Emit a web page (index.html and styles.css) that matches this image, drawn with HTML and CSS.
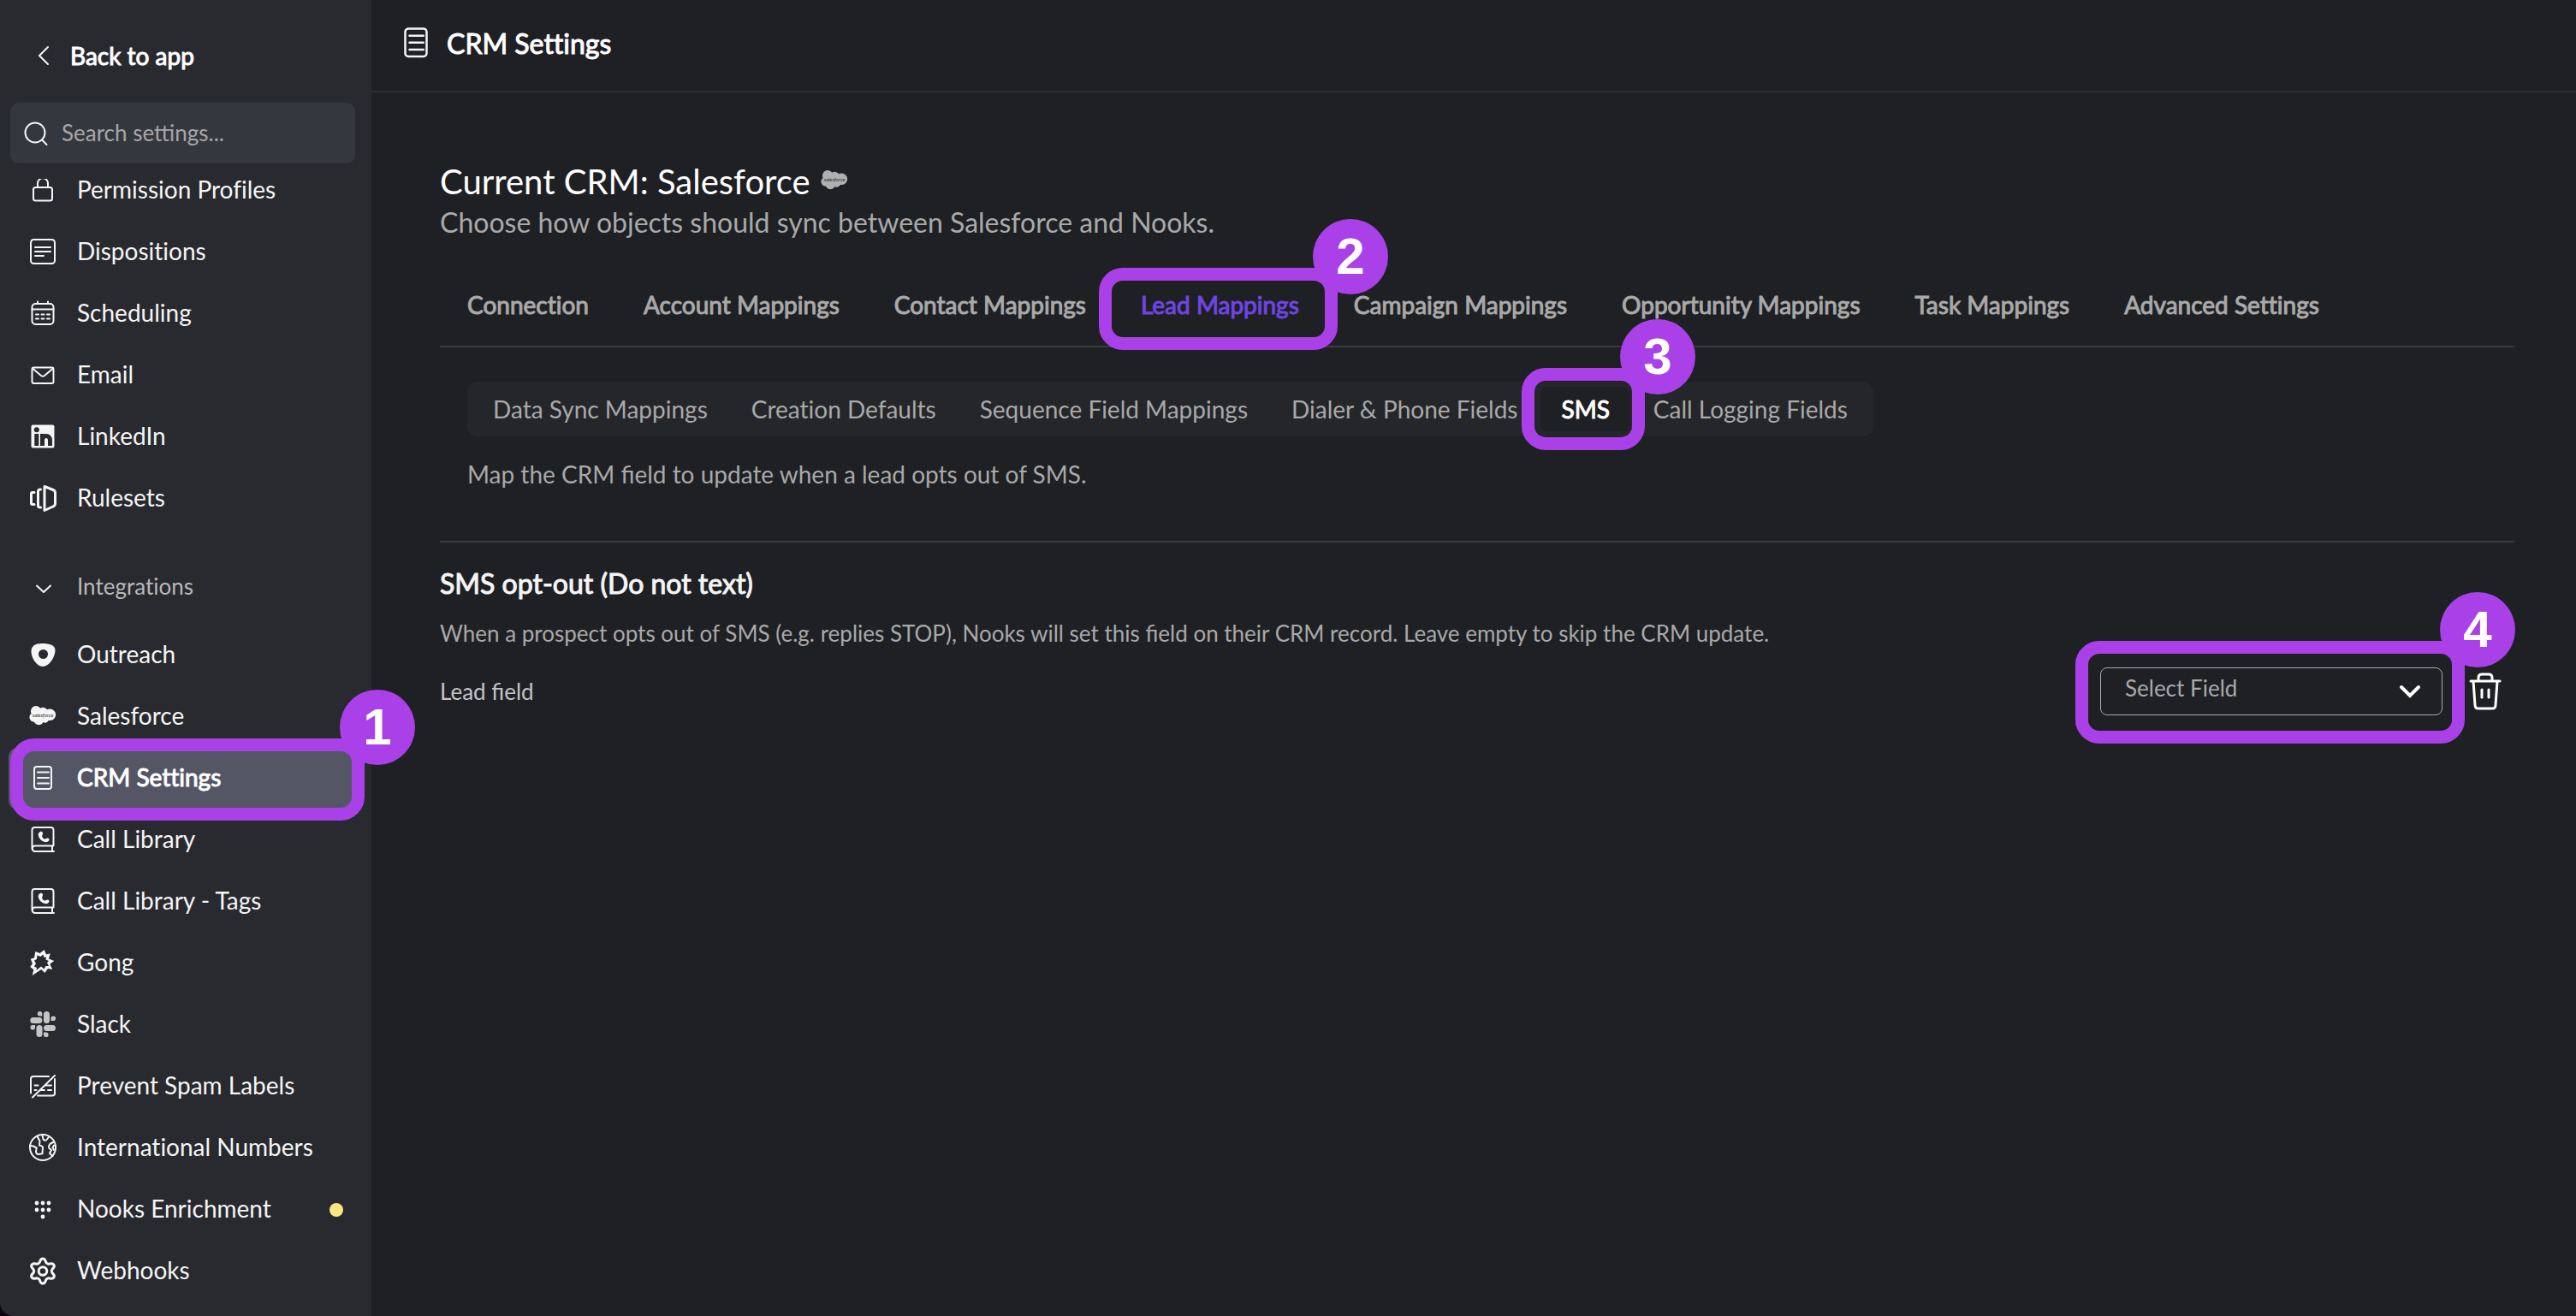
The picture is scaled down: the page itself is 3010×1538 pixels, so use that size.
FILE: index.html
```html
<!DOCTYPE html>
<html lang="en">
<head>
    <meta charset="UTF-8">
    <meta name="viewport" content="width=device-width, initial-scale=1.0">
    <title>CRM Settings</title>
    <link rel="stylesheet" href="styles.css">
</head>
<body>
    <!-- shared icons -->
    <svg class="sprite" aria-hidden="true">
        <symbol id="icon-document" viewBox="0 0 32 32">
            <rect x="6" y="2" width="20" height="26" rx="3"/>
            <path d="M10 8.5h13M10 15h13M10 21.5h13"/>
        </symbol>
        <symbol id="icon-library" viewBox="0 0 32 32">
            <path d="M3.5 26V4a3 3 0 0 1 3-3H26a3 3 0 0 1 2.5 3v18.5H6.5a3.3 3.3 0 0 0 0 6.500H29M27 23v6"/>
            <path class="solid" d="M13 6c2-.8 3 .2 3 2 0 1.5-1 2-.8 3.5.3 1.5 1.5 2.8 3 3 1.5.2 2-1 3.5-1s2.300 1 1.500 2.800c-.8 1.700-3 2.200-5 1.700-4-1-7-4.500-7.500-8C10.500 8.300 11.500 6.600 13 6z"/>
        </symbol>
        <symbol id="icon-cloud" viewBox="0 0 32 32">
            <path class="cloud" d="M13.300 5.700A5.600 5.600 0 0 1 21 7.300A6.800 6.800 0 1 1 22.800 19.900A5 5 0 0 1 16.300 22A5.700 5.700 0 0 1 5.900 21.600A5.400 5.400 0 0 1 2.600 11.900A6.200 6.200 0 0 1 13.300 5.700Z"/>
            <text x="16" y="15.500" text-anchor="middle">salesforce</text>
        </symbol>
    </svg>

    <div class="app">
        <aside class="sidebar">
            <a href="#" class="back">
                <svg class="icon" viewBox="0 0 32 32"><path d="M22 6L12 16L22 26"/></svg>
                <span class="strong">Back to app</span>
            </a>

            <label class="search">
                <svg class="icon" viewBox="0 0 32 32"><circle cx="15" cy="15" r="11.500"/><path d="M23 23.500L28.500 29"/></svg>
                <input type="text" placeholder="Search settings..." aria-label="Search settings">
            </label>

            <nav class="nav">
                <div class="nav-list">
                    <a href="#" class="nav-item">
                        <svg class="icon" viewBox="0 0 32 32"><rect x="5" y="12" width="22" height="15.500" rx="2.500"/><path d="M10 12V7.500a6 6.500 0 0 1 12 0V12"/></svg>
                        <span>Permission Profiles</span>
                    </a>
                    <a href="#" class="nav-item">
                        <svg class="icon" viewBox="0 0 32 32"><rect x="2" y="1" width="28" height="28" rx="3.500"/><path d="M7 10h18M7 15h18M7 20h10"/></svg>
                        <span>Dispositions</span>
                    </a>
                    <a href="#" class="nav-item">
                        <svg class="icon" viewBox="0 0 32 32"><rect x="3.500" y="4" width="25" height="24" rx="4"/><path d="M3.500 10.500h25M10 1.500v2.500M22 1.500v2.500M8 16.500h3M14.500 16.500h3M21 16.500h3M8 21.500h3M14.500 21.500h3M21 21.500h3"/></svg>
                        <span>Scheduling</span>
                    </a>
                    <a href="#" class="nav-item">
                        <svg class="icon" viewBox="0 0 32 32"><rect x="3.500" y="6.500" width="25" height="18.500" rx="2"/><path d="M4 7.500L14 16Q16 17.500 18 16L28 7.500"/></svg>
                        <span>Email</span>
                    </a>
                    <a href="#" class="nav-item">
                        <svg class="icon linkedin" viewBox="0 0 32 32">
                            <rect class="tile" x="2.500" y="1.500" width="27" height="27" rx="2"/>
                            <circle class="hole" cx="8.800" cy="7.200" r="3"/>
                            <path d="M8.800 12v14M15.500 12v14M15.500 20c0-7.500 9-7.500 9 0v6"/>
                        </svg>
                        <span>LinkedIn</span>
                    </a>
                    <a href="#" class="nav-item">
                        <svg class="icon" viewBox="0 0 32 32"><path class="thick" d="M18 1.500L28 5.500Q30.500 6.500 30.500 9V21.500Q30.500 24 28 25L18 29.500ZM13.500 5Q10.500 5 10.500 7V24Q10.500 26 13.500 26M6 8.500H4Q2.500 8.500 2.500 10V21Q2.500 22.500 4 22.500H6"/></svg>
                        <span>Rulesets</span>
                    </a>

                    <button type="button" class="nav-group">
                        <svg class="icon" viewBox="0 0 32 32"><path d="M9 13.500L17 21L25 13.500"/></svg>
                        <span>Integrations</span>
                    </button>

                    <a href="#" class="nav-item">
                        <svg class="icon" viewBox="0 0 32 32"><path class="solid" fill-rule="evenodd" d="M15 2C24 2 30.500 4 30.500 10C30.500 17 24 29 16 29C9 29 2.500 19 2.500 11.500C2.500 5 7 2 15 2ZM16.500 9a5.500 5.500 0 1 0 0 11a5.500 5.500 0 1 0 0-11Z"/></svg>
                        <span>Outreach</span>
                    </a>
                    <a href="#" class="nav-item">
                        <svg class="icon"><use href="#icon-cloud"/></svg>
                        <span>Salesforce</span>
                    </a>
                    <a href="#" class="nav-item active">
                        <svg class="icon"><use href="#icon-document"/></svg>
                        <span class="strong">CRM Settings</span>
                        <i class="callout callout-nav"><b>1</b></i>
                    </a>
                    <a href="#" class="nav-item">
                        <svg class="icon"><use href="#icon-library"/></svg>
                        <span>Call Library</span>
                    </a>
                    <a href="#" class="nav-item">
                        <svg class="icon"><use href="#icon-library"/></svg>
                        <span>Call Library - Tags</span>
                    </a>
                    <a href="#" class="nav-item">
                        <svg class="icon" viewBox="0 0 32 32"><path class="solid" fill-rule="evenodd" d="M17.700 0L20 5.500L24.700 4.300L23 10.500L29.300 13L24.300 16.700L27.300 23L22 22L18.300 27L14.300 23L3.700 30L5.300 23.300L1.300 20L4 16L1.700 10.700L6 9.300L7.300 2L12.700 4ZM16.500 5.500L13.500 8L9.500 6.500L9 11L6 12.500L8 16L6 19.500L9 21L8.500 24L14 19.500L17.500 22.500L19.500 19L23 19L21 15L23 13L19.500 11.500L20 8.500L17.500 9Z"/></svg>
                        <span>Gong</span>
                    </a>
                    <a href="#" class="nav-item">
                        <svg class="icon slack" viewBox="0 0 32 32">
                            <g class="solid">
                                <rect x="1.300" y="7" width="14" height="7" rx="3.500"/>
                                <rect x="17" y="0" width="7" height="14" rx="3.500"/>
                                <rect x="17" y="16" width="14" height="7" rx="3.500"/>
                                <rect x="8.500" y="16" width="7" height="14" rx="3.500"/>
                                <path d="M15.300 5.500V3A2.800 2.800 0 1 0 12.500 5.500ZM25.500 11V8.200A2.800 2.800 0 1 1 28 11ZM17 24.500V27A2.800 2.800 0 1 0 19.800 24.500ZM7 16H4A2.800 2.800 0 1 0 7 19Z"/>
                            </g>
                        </svg>
                        <span>Slack</span>
                    </a>
                    <a href="#" class="nav-item">
                        <svg class="icon" viewBox="0 0 32 32"><path d="M23 4H5Q2 4 2 7V23.500M30 7V23.500Q30 26.500 27 26.500H10M30 3L4 28.500M6.500 14.500h4M19 14.500h7M6.500 20h2M14 20h4M22 20h4"/></svg>
                        <span>Prevent Spam Labels</span>
                    </a>
                    <a href="#" class="nav-item">
                        <svg class="icon" viewBox="0 0 32 32"><circle cx="16" cy="15" r="15"/><path d="M1 13L5 13.500L8.700 15.500L8 20Q8.500 23 11 23L15.500 22.300L16 14.500Q15 13 12 12.500L12.500 7.500L9.500 2M15.300 0L16.500 5.500Q19 8 21 5.500L23.500 2M29.300 8.500L25 10.500Q22 14 23.500 16L26 18L24 22L27.500 25M29 12.500L27.500 15L29 18"/></svg>
                        <span>International Numbers</span>
                    </a>
                    <a href="#" class="nav-item">
                        <svg class="icon" viewBox="0 0 32 32">
                            <g class="solid">
                                <circle cx="9" cy="8" r="2.400"/><circle cx="16" cy="8" r="2.400"/><circle cx="23" cy="8" r="2.400"/>
                                <circle cx="9" cy="16" r="2.400"/><circle cx="16" cy="16" r="2.400"/><circle cx="23" cy="16" r="2.400"/>
                                <circle cx="16" cy="24" r="2.400"/>
                            </g>
                        </svg>
                        <span>Nooks Enrichment</span>
                        <i class="status-dot"></i>
                    </a>
                    <a href="#" class="nav-item">
                        <svg class="icon" viewBox="0 0 32 32">
                            <circle class="thick" cx="16" cy="15.500" r="4.800"/>
                            <path class="thick" d="M16 1C18.500 1 18.800 2.500 19.400 4.500C20 6.500 22 7.500 24 7C26 6.500 27.700 6 29 8.200C30.200 10.500 29 11.500 27.500 12.800C26 14.200 26 16.800 27.500 18.200C29 19.500 30.200 20.500 29 22.800C27.700 25 26 24.500 24 24C22 23.500 20 24.500 19.400 26.500C18.800 28.500 18.500 30 16 30C13.500 30 13.200 28.500 12.600 26.500C12 24.500 10 23.500 8 24C6 24.500 4.300 25 3 22.800C1.800 20.500 3 19.500 4.500 18.200C6 16.800 6 14.200 4.500 12.800C3 11.500 1.800 10.500 3 8.200C4.300 6 6 6.500 8 7C10 7.500 12 6.500 12.600 4.500C13.200 2.500 13.500 1 16 1Z"/>
                        </svg>
                        <span>Webhooks</span>
                    </a>
                </div>
            </nav>
        </aside>

        <main class="main">
            <header class="header">
                <svg class="icon"><use href="#icon-document"/></svg>
                <h1 class="strong">CRM Settings</h1>
            </header>

            <div class="content">
                <h2 class="crm-title">
                    Current CRM: Salesforce
                    <svg class="icon"><use href="#icon-cloud"/></svg>
                </h2>
                <p class="crm-desc">Choose how objects should sync between Salesforce and Nooks.</p>

                <div class="tabs">
                    <button type="button" class="tab strong">Connection</button>
                    <button type="button" class="tab strong">Account Mappings</button>
                    <button type="button" class="tab strong">Contact Mappings</button>
                    <button type="button" class="tab strong active">Lead Mappings<i class="callout callout-tab"><b>2</b></i></button>
                    <button type="button" class="tab strong">Campaign Mappings</button>
                    <button type="button" class="tab strong">Opportunity Mappings</button>
                    <button type="button" class="tab strong">Task Mappings</button>
                    <button type="button" class="tab strong">Advanced Settings</button>
                </div>

                <div class="panel">
                    <div class="subtabs">
                        <button type="button" class="subtab">Data Sync Mappings</button>
                        <button type="button" class="subtab">Creation Defaults</button>
                        <button type="button" class="subtab">Sequence Field Mappings</button>
                        <button type="button" class="subtab">Dialer &amp; Phone Fields</button>
                        <button type="button" class="subtab strong active">SMS<i class="callout callout-subtab"><b>3</b></i></button>
                        <button type="button" class="subtab">Call Logging Fields</button>
                    </div>
                    <p class="panel-desc">Map the CRM field to update when a lead opts out of SMS.</p>
                </div>

                <section class="opt-out">
                    <h3 class="strong">SMS opt-out (Do not text)</h3>
                    <p>When a prospect opts out of SMS (e.g. replies STOP), Nooks will set this field on their CRM record. Leave empty to skip the CRM update.</p>
                    <div class="field-row">
                        <label for="leadField">Lead field</label>
                        <div class="select-box">
                            <select id="leadField">
                                <option>Select Field</option>
                            </select>
                            <svg class="chevron" viewBox="0 0 32 32"><path d="M6 11L16 21L26 11"/></svg>
                            <i class="callout callout-select"><b>4</b></i>
                        </div>
                        <button type="button" class="delete" aria-label="Delete">
                            <svg viewBox="0 0 40 48"><path d="M3 12H37M12 11V8Q12 4 16 4H24Q28 4 28 8V11M6 12L8 40Q8 44 12 44H28Q32 44 32 40L34 12M16 22V31M24 22V31"/></svg>
                        </button>
                    </div>
                </section>
            </div>
        </main>
    </div>
</body>
</html>
```
FILE: styles.css
```css
* {
    box-sizing: border-box;
}
body {
    margin: 0;
    font-family: Lato, "Open Sans", sans-serif;
    font-size: 28px;
    line-height: 36px;
    font-variant-ligatures: none;
    color: #f5f5f5;
    background-color: #0c0610;
}
h1, h2, h3, p {
    margin: 0;
    font-weight: 400;
}
p, label {
    font-variant-ligatures: common-ligatures;
}
a {
    color: inherit;
    text-decoration: none;
}
button, input, select {
    font: inherit;
    color: inherit;
    background: none;
    border: 0;
    padding: 0;
    margin: 0;
}
button {
    cursor: pointer;
}
.sprite {
    display: none;
}
.strong {
    color: #fff;
    -webkit-text-stroke: 1px;
}
.icon {
    flex: none;
    width: 32px;
    height: 32px;
    overflow: visible;
    color: #f5f5f5;
    fill: none;
    stroke: currentColor;
    stroke-width: 2;
    stroke-linecap: round;
    stroke-linejoin: round;
}
.thick {
    stroke-width: 3;
}
.solid,
.cloud {
    fill: currentColor;
    stroke: none;
}
.cloud + text {
    font-size: 6px;
    font-style: italic;
    fill: #292a2f;
    stroke: none;
}

.app {
    display: flex;
    min-height: 100vh;
}

/* sidebar */
.sidebar {
    position: relative;
    z-index: 1;
    flex: none;
    display: flex;
    flex-direction: column;
    width: 434px;
    background-color: #292a2f;
    border-bottom-left-radius: 16px;
}
.back {
    display: flex;
    align-items: center;
    gap: 16px;
    height: 120px;
    padding: 10px 34px 0;
}
.search {
    display: flex;
    align-items: center;
    gap: 14px;
    height: 71px;
    margin: 0 19px 0 12px;
    padding: 0 14px;
    border-radius: 10px;
    background-color: #35373f;
}
.search input {
    flex: 1;
    min-width: 0;
    padding-bottom: 2px;
    font-size: 26px;
    outline: none;
}
.search input::placeholder {
    color: #a6a6a8;
}
/* the list is scrolled a little, its first icon runs under the top edge */
.nav {
    margin: 18px 19px 0 10px;
    clip-path: inset(0 -100px 0 0);
}
.nav-list {
    margin-top: -22px;
}
.nav-item,
.nav-group {
    position: relative;
    display: flex;
    align-items: center;
    gap: 24px;
    width: 100%;
    height: 72px;
    padding: 0 14px 0 24px;
    border-radius: 10px;
}
.nav-item span,
.nav-group span {
    padding-bottom: 4px;
}
.nav-item.active {
    background-color: #545666;
}
.nav-group {
    height: 111px;
    padding-top: 24px;
    font-size: 26px;
    color: #b9b9b9;
}
.linkedin .tile {
    fill: #f5f5f5;
    stroke: none;
}
.linkedin .hole {
    fill: #292a2f;
    stroke: none;
}
.linkedin path {
    stroke: #292a2f;
    stroke-width: 5;
    stroke-linecap: butt;
}
.icon.slack {
    color: #c4c4c4;
}
.status-dot {
    width: 16px;
    height: 16px;
    margin-left: auto;
    border-radius: 50%;
    background-color: #fde580;
}

/* main */
.main {
    flex: 1;
    min-width: 0;
    background-color: #1f2024;
}
.header {
    display: flex;
    align-items: center;
    gap: 16px;
    height: 108px;
    padding: 0 32px 4px;
    border-bottom: 2px solid #2d2e34;
}
.header .icon {
    width: 40px;
    height: 40px;
}
.header h1 {
    font-size: 32px;
}
.content {
    padding: 80px 72px 80px 80px;
}
.crm-title {
    display: flex;
    align-items: center;
    gap: 12px;
    font-size: 40px;
    line-height: 48px;
    color: #fff;
}
.crm-title .icon {
    color: #b0b0b0;
}
.crm-desc {
    font-size: 32px;
    line-height: 48px;
    color: #a9a9a9;
}
.tabs {
    display: flex;
    margin-top: 24px;
    border-bottom: 2px solid #3a3b3f;
}
.tab {
    position: relative;
    height: 96px;
    padding: 0 32px;
    color: #a9a9a9;
    white-space: nowrap;
}
.tab.active {
    color: #6e45e2;
}
.panel {
    padding: 40px 32px 60px;
    border-bottom: 2px solid #3a3b3f;
}
.subtabs {
    display: inline-flex;
    gap: 3px;
    padding: 6px;
    border-radius: 12px;
    background-color: #25262a;
}
.subtab {
    position: relative;
    height: 52px;
    padding: 0 24px;
    border-radius: 8px;
    color: #a9a9a9;
    white-space: nowrap;
}
.subtab.active {
    color: #fff;
    background-color: #1f2024;
}
.panel-desc {
    margin-top: 26px;
    color: #a9a9a9;
}
.opt-out {
    padding-top: 28px;
    font-size: 26px;
}
.opt-out h3 {
    font-size: 32px;
    line-height: 40px;
    color: #f5f5f5;
}
.opt-out p {
    margin-top: 20px;
    color: #a9a9a9;
}
.field-row {
    display: flex;
    align-items: center;
    margin-top: 22px;
}
.field-row label {
    flex: 1;
    color: #c4c4c4;
}
.select-box {
    position: relative;
    width: 400px;
}
.select-box select {
    display: block;
    width: 100%;
    height: 56px;
    padding: 0 60px 8px 28px;
    border: 1px solid #a9a9a9;
    border-radius: 8px;
    color: #a9a9a9;
    appearance: none;
}
.chevron {
    position: absolute;
    top: 12px;
    right: 22px;
    width: 32px;
    height: 32px;
    fill: none;
    stroke: #fff;
    stroke-width: 4;
    stroke-linecap: round;
    pointer-events: none;
}
.delete {
    margin: 0 14px 0 30px;
}
.delete svg {
    display: block;
    width: 40px;
    height: 52px;
    fill: none;
    stroke: #fff;
    stroke-width: 3;
    stroke-linecap: round;
    stroke-linejoin: round;
}

/* numbered walkthrough markers */
.callout {
    position: absolute;
    z-index: 2;
    border: 15px solid #aa40e8;
    border-radius: 28px;
    font-style: normal;
    pointer-events: none;
}
.callout b {
    position: absolute;
    top: -72px;
    right: -74px;
    width: 88px;
    height: 88px;
    border-radius: 50%;
    background-color: #aa40e8;
    color: #fff;
    font: bold 60px/88px "Liberation Sans", Arial, sans-serif;
    text-align: center;
    -webkit-text-stroke: 0;
}
.callout-nav {
    inset: -11px -11px -13px 2px;
}
.callout-tab {
    inset: 5px -13px -5px -17px;
}
.callout-subtab {
    inset: -22px -17px -22px -22px;
}
.callout-select {
    inset: -31px -26px -33px -29px;
}
```
